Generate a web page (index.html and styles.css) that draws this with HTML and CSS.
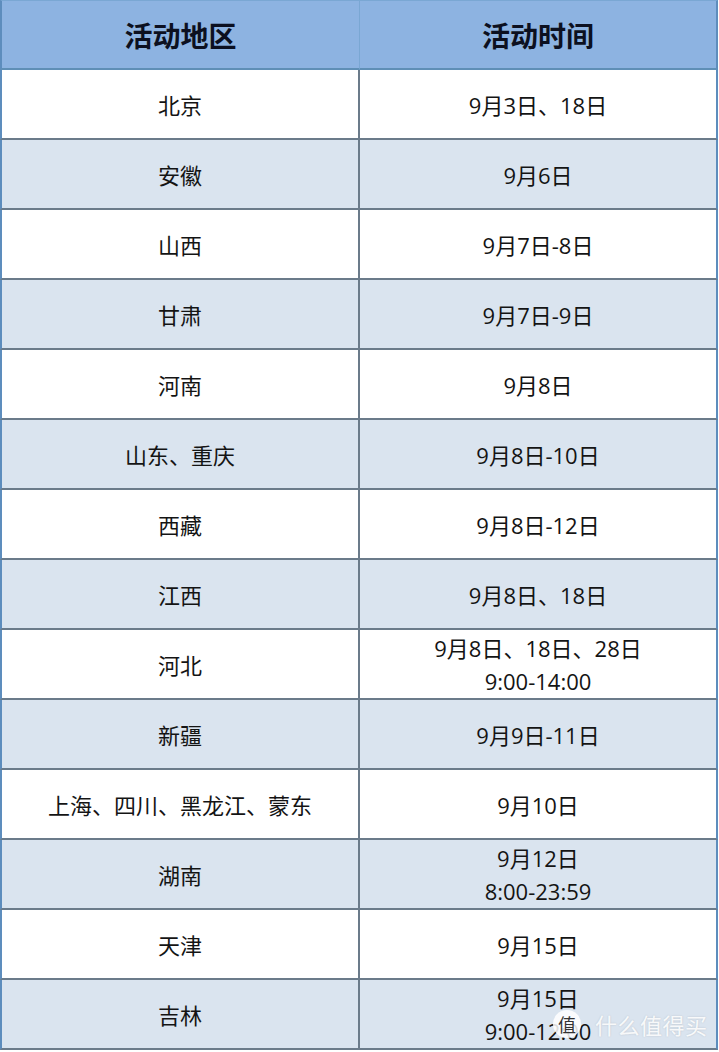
FILE: index.html
```html
<!DOCTYPE html>
<html lang="zh-CN">
<head>
<meta charset="utf-8">
<title>活动时间表</title>
<link rel="stylesheet" href="styles.css">
</head>
<body>
<div class="sheet">
  <div class="grid">
    <div class="cell head left">活动地区</div>
    <div class="cell head">活动时间</div>

    <div class="cell left">北京</div><div class="cell">9月3日、18日</div>
    <div class="cell left alt">安徽</div><div class="cell alt">9月6日</div>
    <div class="cell left">山西</div><div class="cell">9月7日-8日</div>
    <div class="cell left alt">甘肃</div><div class="cell alt">9月7日-9日</div>
    <div class="cell left">河南</div><div class="cell">9月8日</div>
    <div class="cell left alt">山东、重庆</div><div class="cell alt">9月8日-10日</div>
    <div class="cell left">西藏</div><div class="cell">9月8日-12日</div>
    <div class="cell left alt">江西</div><div class="cell alt">9月8日、18日</div>
    <div class="cell left">河北</div><div class="cell two">9月8日、18日、28日<br>9:00-14:00</div>
    <div class="cell left alt">新疆</div><div class="cell alt">9月9日-11日</div>
    <div class="cell left">上海、四川、黑龙江、蒙东</div><div class="cell">9月10日</div>
    <div class="cell left alt">湖南</div><div class="cell alt two">9月12日<br>8:00-23:59</div>
    <div class="cell left">天津</div><div class="cell">9月15日</div>
    <div class="cell left alt">吉林</div><div class="cell alt two">9月15日<br>9:00-12:00</div>
  </div>
  <div class="watermark" aria-hidden="true">
    <span class="wm-badge">值</span><span class="wm-text">什么值得买</span>
  </div>
</div>
</body>
</html>
```

FILE: styles.css
```css
html, body {
  margin: 0;
  padding: 0;
  background: #ffffff;
}

body {
  font-family: "Open Sans", "Noto Sans CJK SC", sans-serif;
  color: #141414;
  width: 719px;
  height: 1052px;
  overflow: hidden;
}

.sheet {
  position: relative;
  width: 719px;
  height: 1052px;
}

.grid {
  display: grid;
  grid-template-columns: 360px 358px;
  width: 718px;
}

.cell {
  box-sizing: border-box;
  height: 70px;
  display: flex;
  align-items: center;
  justify-content: center;
  text-align: center;
  font-size: 22px;
  line-height: 32px;
  background: #ffffff;
  border-bottom: 2px solid #6b7b8a;
  border-right: 2px solid #5d8dbd;
  padding-top: 1px;
}

.cell.left {
  border-left: 2px solid #5d8dbd;
  border-right: 2px solid #6b7b8a;
}

.cell.alt {
  background: #dae4ef;
}

.cell.head {
  background: #8db3e1;
  font-family: "Noto Sans CJK SC", sans-serif;
  font-weight: 700;
  font-size: 28px;
  color: #0c1020;
  border-bottom: 2px solid #5f8fb6;
  border-top: 1px solid #7aa7d3;
  padding-top: 0;
}

.cell.head.left {
  border-right: 1px solid #7aa7d3;
}

.cell.two {
  line-height: 33px;
  padding-top: 2px;
}

.watermark {
  position: absolute;
  left: 553px;
  top: 1010px;
  display: flex;
  align-items: center;
  gap: 14px;
  pointer-events: none;
  user-select: none;
}

.wm-badge {
  width: 28px;
  height: 28px;
  border-radius: 50%;
  background: rgba(255, 255, 255, 0.85);
  color: #333;
  font-family: "Noto Sans CJK SC", sans-serif;
  font-size: 18px;
  line-height: 28px;
  text-align: center;
}

.wm-text {
  font-family: "Noto Sans CJK SC", sans-serif;
  font-size: 22px;
  line-height: 28px;
  color: rgba(255, 255, 255, 0.9);
  text-shadow: 0 0 2px rgba(0, 0, 0, 0.15);
  letter-spacing: 0.5px;
}
```
